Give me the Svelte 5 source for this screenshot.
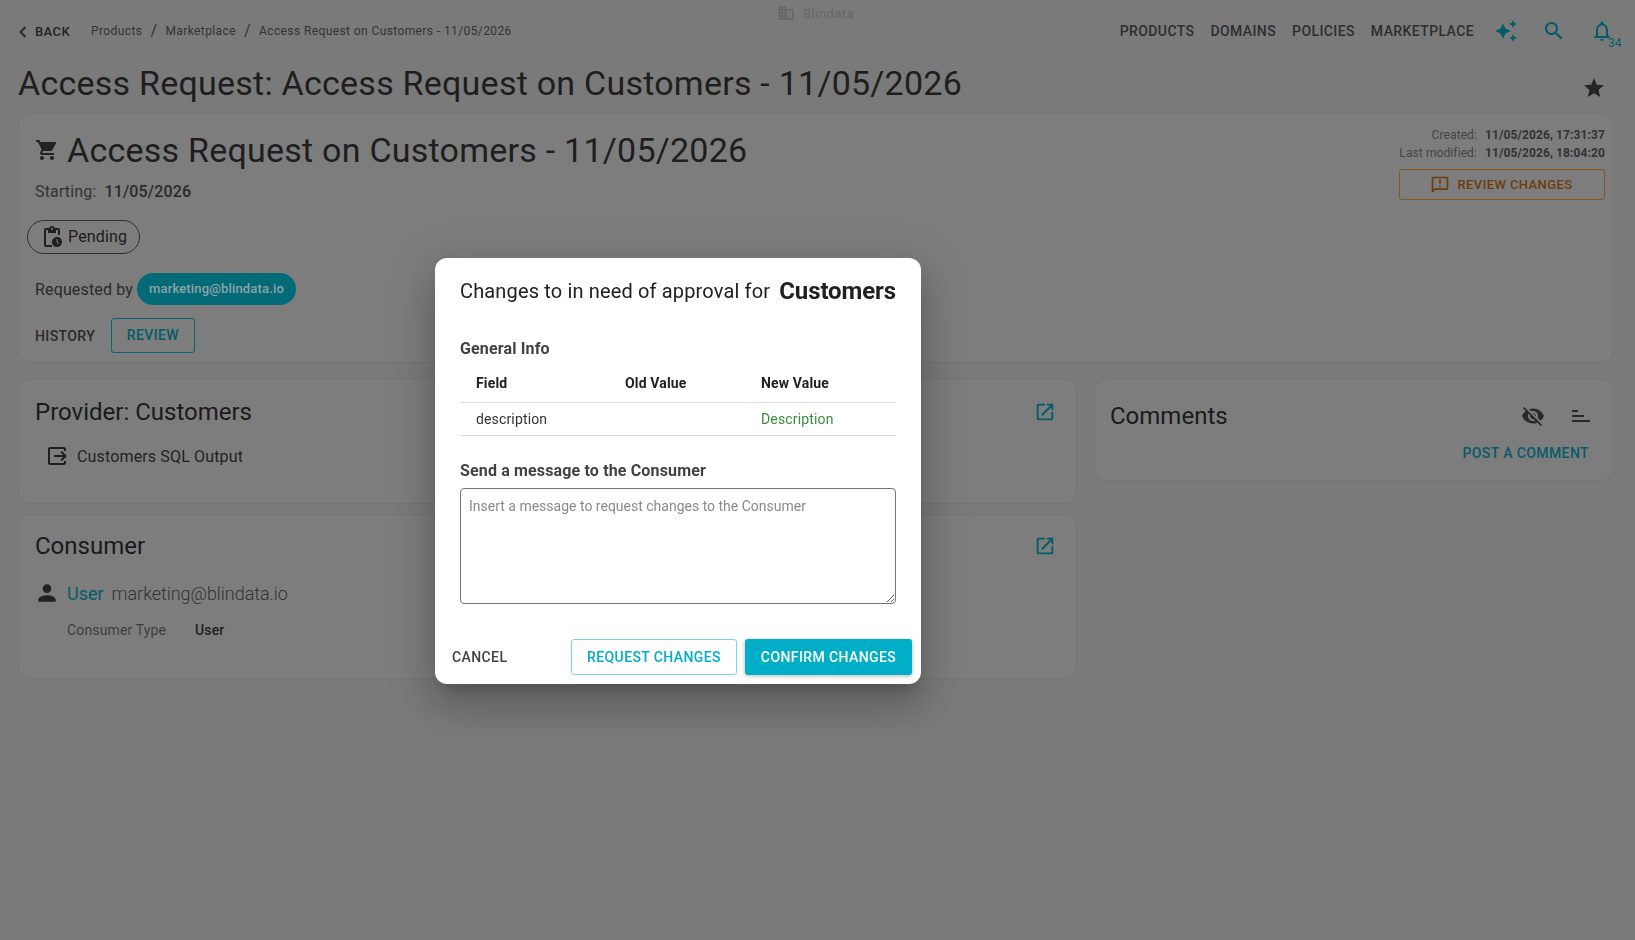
<script>
  const crumbs = ['Products', 'Marketplace'];
  const nav = ['PRODUCTS', 'DOMAINS', 'POLICIES', 'MARKETPLACE'];
</script>

<div class="page">
  <header class="top">
    <div class="brand">
      <svg class="brand-ico" viewBox="0 0 24 24"><path d="M12 7V3H2v18h20V7H12zM6 19H4v-2h2v2zm0-4H4v-2h2v2zm0-4H4V9h2v2zm0-4H4V5h2v2zm4 12H8v-2h2v2zm0-4H8v-2h2v2zm0-4H8V9h2v2zm0-4H8V5h2v2zm10 12h-8v-2h2v-2h-2v-2h2v-2h-2V9h8v10zm-2-8h-2v2h2v-2zm0 4h-2v2h2v-2z"/></svg>
      <span>Blindata</span>
    </div>
    <div class="left">
      <button class="back">
        <svg width="8" height="12" viewBox="0 0 8 12"><path d="M6.5 1 1.6 6l4.9 5" fill="none" stroke="#2b2b2b" stroke-width="2"/></svg>
        BACK
      </button>
      <nav class="crumbs">
        {#each crumbs as c}
          <span>{c}</span><i>/</i>
        {/each}
        <span>Access Request on Customers - 11/05/2026</span>
      </nav>
    </div>
    <div class="right">
      {#each nav as n}<span class="nav-item">{n}</span>{/each}
      <svg class="ico teal spark" viewBox="0 0 24 24"><path d="M19 9l1.25-2.75L23 5l-2.75-1.25L19 1l-1.25 2.75L15 5l2.75 1.25L19 9zm-7.5.5L9 4 6.5 9.5 1 12l5.5 2.5L9 20l2.5-5.5L17 12l-5.5-2.5zM19 15l-1.25 2.75L15 19l2.75 1.25L19 23l1.25-2.75L23 19l-2.75-1.25L19 15z"/></svg>
      <svg class="ico teal search" viewBox="0 0 24 24"><path d="M15.5 14h-.79l-.28-.27C15.41 12.59 16 11.11 16 9.5 16 5.91 13.09 3 9.5 3S3 5.91 3 9.5 5.91 16 9.5 16c1.61 0 3.09-.59 4.23-1.57l.27.28v.79l5 4.99L20.49 19l-4.99-5zm-6 0C7.01 14 5 11.99 5 9.5S7.01 5 9.5 5 14 7.01 14 9.5 11.99 14 9.5 14z"/></svg>
      <div class="bell">
        <svg class="ico teal" viewBox="0 0 24 24"><path d="M12 22c1.1 0 2-.9 2-2h-4c0 1.1.9 2 2 2zm6-6v-5c0-3.07-1.63-5.64-4.5-6.32V4c0-.83-.67-1.5-1.5-1.5s-1.5.67-1.5 1.5v.68C7.64 5.36 6 7.92 6 11v5l-2 2v1h16v-1l-2-2zm-2 1H8v-6c0-2.48 1.51-4.5 4-4.5s4 2.02 4 4.5v6z"/></svg>
        <span class="badge">34</span>
      </div>
    </div>
  </header>

  <div class="title-row">
    <h1>Access Request: Access Request on Customers - 11/05/2026</h1>
    <svg class="ico star" viewBox="0 0 24 24"><path d="M12 17.27L18.18 21l-1.64-7.03L22 9.24l-7.19-.61L12 2 9.19 8.63 2 9.24l5.46 4.73L5.82 21z"/></svg>
  </div>

  <section class="card main">
    <div class="main-left">
      <div class="h-row">
        <svg class="cart" viewBox="0 0 24 24"><path d="M7 18c-1.1 0-1.99.9-1.99 2S5.9 22 7 22s2-.9 2-2-.9-2-2-2zM1 2v2h2l3.6 7.59-1.35 2.45c-.16.28-.25.61-.25.96 0 1.1.9 2 2 2h12v-2H7.42c-.14 0-.25-.11-.25-.25l.03-.12.9-1.63h7.45c.75 0 1.41-.41 1.75-1.03l3.58-6.49c.08-.14.12-.31.12-.48 0-.55-.45-1-1-1H5.21l-.94-2H1zm16 16c-1.1 0-1.99.9-1.99 2s.89 2 1.99 2 2-.9 2-2-.9-2-2-2z"/></svg>
        <h2>Access Request on Customers - 11/05/2026</h2>
      </div>
      <div class="starting"><span>Starting:</span> <b>11/05/2026</b></div>
      <div class="pending">
        <svg viewBox="0 0 24 24"><path d="M17 12c-2.76 0-5 2.24-5 5s2.24 5 5 5 5-2.24 5-5-2.24-5-5-5zm1.65 7.35L16.5 17.2V14h1v2.79l1.85 1.85-.7.71zM18 3h-3.18C14.4 1.84 13.3 1 12 1s-2.4.84-2.82 2H6c-1.1 0-2 .9-2 2v15c0 1.1.9 2 2 2h6v-2H6V5h2v3h8V5h2v5h2V5c0-1.1-.9-2-2-2zm-6 2c-.55 0-1-.45-1-1s.45-1 1-1 1 .45 1 1-.45 1-1 1z"/></svg>
        <span>Pending</span>
      </div>
      <div class="req">
        <span>Requested by</span>
        <span class="chip">marketing@blindata.io</span>
      </div>
      <div class="tabs">
        <span class="tab">HISTORY</span>
        <span class="tab active">REVIEW</span>
      </div>
    </div>
    <div class="main-right">
      <div class="meta"><span>Created:</span><b>11/05/2026, 17:31:37</b></div>
      <div class="meta"><span>Last modified:</span><b>11/05/2026, 18:04:20</b></div>
      <button class="review">
        <svg viewBox="0 0 24 24"><path d="M20 2H4c-1.1 0-1.99.9-1.99 2L2 22l4-4h14c1.1 0 2-.9 2-2V4c0-1.1-.9-2-2-2zm0 14H5.17L4 17.17V4h16v12zM11 5h2v6h-2zm0 8h2v2h-2z"/></svg>
        REVIEW CHANGES
      </button>
    </div>
  </section>

  <div class="grid">
    <div class="col">
      <section class="card provider">
        <div class="card-head">
          <h3>Provider: Customers</h3>
          <svg class="open" viewBox="0 0 24 24"><path d="M19 19H5V5h7V3H5c-1.11 0-2 .9-2 2v14c0 1.1.89 2 2 2h14c1.1 0 2-.9 2-2v-7h-2v7zM14 3v2h3.59l-9.83 9.83 1.41 1.41L19 6.41V10h2V3h-7z"/></svg>
        </div>
        <div class="port">
          <svg viewBox="0 0 24 24"><path d="M17 17l5-5-5-5-1.41 1.41L18.17 11H9v2h9.17l-2.58 2.59z"/><path d="M19 19H5V5h14v2h2V5c0-1.1-.89-2-2-2H5c-1.11 0-2 .9-2 2v14c0 1.1.89 2 2 2h14c1.11 0 2-.9 2-2v-2h-2v2z"/></svg>
          <span>Customers SQL Output</span>
        </div>
      </section>
      <section class="card consumer">
        <div class="card-head">
          <h3>Consumer</h3>
          <svg class="open" viewBox="0 0 24 24"><path d="M19 19H5V5h7V3H5c-1.11 0-2 .9-2 2v14c0 1.1.89 2 2 2h14c1.1 0 2-.9 2-2v-7h-2v7zM14 3v2h3.59l-9.83 9.83 1.41 1.41L19 6.41V10h2V3h-7z"/></svg>
        </div>
        <div class="user">
          <svg viewBox="0 0 24 24"><path d="M12 12c2.21 0 4-1.79 4-4s-1.79-4-4-4-4 1.79-4 4 1.79 4 4 4zm0 2c-2.67 0-8 1.34-8 4v2h16v-2c0-2.66-5.33-4-8-4z"/></svg>
          <span class="u-link">User</span>
          <span class="u-mail">marketing@blindata.io</span>
        </div>
        <div class="ctype"><span>Consumer Type</span><b>User</b></div>
      </section>
    </div>
    <section class="card comments">
      <div class="card-head">
        <h3>Comments</h3>
        <div class="c-icons">
          <svg viewBox="0 0 24 24"><path d="M12 7c2.76 0 5 2.24 5 5 0 .65-.13 1.26-.36 1.83l2.92 2.92c1.51-1.26 2.7-2.89 3.43-4.75-1.73-4.39-6-7.5-11-7.5-1.4 0-2.74.25-3.98.7l2.16 2.16C10.74 7.13 11.35 7 12 7zM2 4.27l2.28 2.28.46.46C3.08 8.3 1.78 10.02 1 12c1.73 4.39 6 7.5 11 7.5 1.55 0 3.03-.3 4.38-.84l.42.42L19.73 22 21 20.73 3.27 3 2 4.27zM7.53 9.8l1.55 1.55c-.05.21-.08.43-.08.65 0 1.66 1.34 3 3 3 .22 0 .44-.03.65-.08l1.55 1.55c-.67.33-1.41.53-2.2.53-2.76 0-5-2.24-5-5 0-.79.2-1.53.53-2.2zm4.31-.78l3.15 3.15.02-.16c0-1.66-1.34-3-3-3l-.17.01z"/></svg>
          <svg viewBox="0 0 24 24"><path d="M3 6h6v2H3zM3 11h12v2H3zM3 16h18v2H3z"/></svg>
        </div>
      </div>
      <div class="post">POST A COMMENT</div>
    </section>
  </div>
</div>

<div class="backdrop">
  <div class="modal" role="dialog">
    <div class="m-title">
      <span>Changes to in need of approval for</span>
      <b>Customers</b>
    </div>
    <div class="m-section">General Info</div>
    <table>
      <thead>
        <tr><th class="c1">Field</th><th class="c2">Old Value</th><th>New Value</th></tr>
      </thead>
      <tbody>
        <tr><td>description</td><td></td><td class="new">Description</td></tr>
      </tbody>
    </table>
    <div class="m-section msg">Send a message to the Consumer</div>
    <textarea placeholder="Insert a message to request changes to the Consumer"></textarea>
    <div class="actions">
      <button class="cancel">CANCEL</button>
      <button class="outline">REQUEST CHANGES</button>
      <button class="solid">CONFIRM CHANGES</button>
    </div>
  </div>
</div>

<style>
  :global(body) {
    margin: 0;
    background: #7a7a7a;
    font-family: Roboto, "Liberation Sans", sans-serif;
    color: #1c1c1c;
  }
  .page {
    height: 940px;
    box-sizing: border-box;
    padding: 0 21px 0 18px;
    overflow: hidden;
  }
  .top {
    height: 62px;
    display: flex;
    justify-content: space-between;
    position: relative;
  }
  .brand {
    position: absolute;
    left: 759px;
    top: 4px;
    display: flex;
    align-items: center;
    gap: 8px;
    font-size: 13px;
    letter-spacing: 0.5px;
    color: #666;
  }
  .brand-ico { width: 18px; height: 18px; fill: #666; }
  .left { display: flex; align-items: flex-start; padding-top: 20px; }
  .back {
    all: unset;
    display: flex;
    align-items: center;
    gap: 8px;
    font-size: 13px;
    font-weight: 500;
    letter-spacing: 0.4px;
    color: #222;
    line-height: 24px;
    height: 24px;
    margin-left: 1px;
  }
  .crumbs {
    display: flex;
    align-items: center;
    margin-left: 21px;
    font-size: 12px;
    letter-spacing: 0.4px;
    color: #333;
    height: 22px;
  }
  .crumbs i {
    font-style: normal;
    font-size: 16px;
    margin: 0 8px;
    color: #333;
    position: relative;
    top: -1px;
  }
  .right { display: flex; align-items: flex-start; padding-top: 22px; }
  .nav-item {
    font-size: 14px;
    font-weight: 500;
    letter-spacing: 0.4px;
    line-height: 18px;
    color: #2e2e2e;
    margin-right: 16px;
  }
  .nav-item:nth-of-type(4) { margin-right: 0; }
  .ico { width: 24px; height: 24px; display: block; flex: none; }
  .teal { fill: #045c6a; }
  .spark { margin: -3px 0 0 20px; }
  .search { margin: -3px 0 0 24px; }
  .bell { position: relative; margin: -3px 0 0 24px; }
  .badge {
    position: absolute;
    left: 18px;
    top: 17px;
    font-size: 12px;
    color: #045c6a;
  }
  .title-row {
    display: flex;
    justify-content: space-between;
    height: 42px;
    margin-bottom: 9px;
  }
  h1 {
    margin: 0;
    font-size: 34px;
    font-weight: 400;
    line-height: 42px;
    letter-spacing: 0.24px;
    color: #1e1e1e;
  }
  .star { fill: #262626; margin: 14px 8px 0 0; }
  .card {
    background: #7d7d7d;
    border: 1px solid #757575;
    border-radius: 12px;
    box-sizing: border-box;
  }
  .main {
    height: 250px;
    display: flex;
    justify-content: space-between;
    padding: 15px 8px 8px 16px;
  }
  .h-row { display: flex; align-items: center; height: 42px; }
  .cart { width: 24px; height: 24px; fill: #222; margin-right: 8px; }
  h2 {
    margin: 0;
    font-size: 34px;
    font-weight: 400;
    line-height: 42px;
    letter-spacing: 0.24px;
    color: #1e1e1e;
  }
  .starting {
    margin-top: 9px;
    font-size: 16px;
    line-height: 24px;
    color: #333;
  }
  .starting span { margin-right: 4px; letter-spacing: 0.15px; }
  .starting b { font-weight: 500; color: #2a2a2a; letter-spacing: 0.15px; }
  .pending {
    width: 113px;
    height: 34px;
    margin: 16px 0 0 -8px;
    box-sizing: border-box;
    border: 1px solid #2f2f2f;
    border-radius: 17px;
    display: flex;
    align-items: center;
    padding-left: 12px;
    gap: 4px;
    font-size: 16px;
    letter-spacing: 0.15px;
    color: #1c1c1c;
  }
  .pending svg { width: 24px; height: 24px; fill: #1f1f1f; }
  .pending span { margin-top: -2px; }
  .req {
    display: flex;
    align-items: center;
    margin-top: 19px;
    height: 32px;
    font-size: 16px;
    letter-spacing: 0.15px;
    color: #2a2a2a;
    gap: 4px;
  }
  .chip {
    height: 32px;
    border-radius: 16px;
    background: #036a77;
    color: #8fa3a7;
    font-size: 13px;
    font-weight: 500;
    letter-spacing: 0.16px;
    padding: 0 12px;
    line-height: 32px;
  }
  .tabs { display: flex; align-items: center; margin-top: 13px; gap: 16px; }
  .tab {
    font-size: 14px;
    font-weight: 500;
    letter-spacing: 0.4px;
    color: #2a2a2a;
  }
  .tab.active {
    box-sizing: border-box;
    height: 35px;
    line-height: 33px;
    padding: 0 14.5px;
    border: 1px solid #0a6471;
    border-radius: 3px;
    color: #045c6a;
  }
  .main-right { display: flex; flex-direction: column; align-items: flex-end; margin-top: -3px; }
  .meta {
    display: flex;
    gap: 8px;
    font-size: 12px;
    line-height: 18px;
    color: #444;
    letter-spacing: 0.1px;
  }
  .meta b { font-weight: 700; color: #333; }
  .review {
    all: unset;
    box-sizing: border-box;
    width: 206px;
    height: 31px;
    margin-top: 7px;
    border: 1px solid #8a5520;
    border-radius: 3px;
    display: flex;
    align-items: center;
    justify-content: center;
    gap: 8px;
    font-size: 13px;
    font-weight: 500;
    letter-spacing: 0.4px;
    color: #6e3c0c;
    padding-right: 2px;
  }
  .review svg { width: 20px; height: 20px; fill: #6e3c0c; }
  .grid {
    display: grid;
    grid-template-columns: 1059px 1fr;
    gap: 17px;
    margin-top: 16px;
    align-items: start;
  }
  .col { display: flex; flex-direction: column; gap: 10px; }
  .provider { height: 125px; padding: 16px 20px 0 16px; }
  .consumer { height: 165px; padding: 15px 20px 0 16px; }
  .comments { height: 102px; padding: 20px 19px 0 15px; }
  .card-head { display: flex; justify-content: space-between; align-items: center; height: 32px; }
  h3 { margin: 0; font-size: 24px; font-weight: 400; line-height: 32px; color: #1a1a1a; }
  .open { width: 22px; height: 22px; fill: #045c6a; }
  .port {
    display: flex;
    align-items: center;
    margin: 16px 0 0 10px;
    gap: 8px;
    font-size: 16px;
    color: #222;
    letter-spacing: 0.15px;
  }
  .port svg { width: 24px; height: 24px; fill: #1f1f1f; }
  .user { display: flex; align-items: center; margin: 15px 0 0 -1px; height: 32px; font-size: 18px; }
  .user svg { width: 26px; height: 26px; fill: #222; margin-right: 7px; }
  .u-link { color: #045c6a; margin-right: 8px; }
  .u-mail { color: #333; font-weight: 300; letter-spacing: -0.05px; }
  .ctype { display: flex; margin: 11px 0 0 32px; font-size: 14px; line-height: 20px; letter-spacing: 0.15px; }
  .ctype span { color: #3d3d3d; width: 128px; }
  .ctype b { font-weight: 500; color: #1f1f1f; }
  .c-icons { display: flex; align-items: center; gap: 24px; }
  .c-icons svg { width: 24px; height: 24px; fill: #2a2a2a; }
  .c-icons svg:last-child { margin-right: 1px; }
  .post {
    margin-top: 11px;
    text-align: right;
    padding-right: 5px;
    font-size: 14px;
    font-weight: 500;
    letter-spacing: 0.4px;
    line-height: 20px;
    color: #045c6a;
  }
  .backdrop {
    position: fixed;
    inset: 0;
    display: flex;
    align-items: center;
    padding-left: 435px;
  }
  .modal {
    width: 486px;
    height: 426px;
    margin-top: 1px;
    box-sizing: border-box;
    background: #fff;
    border-radius: 12px;
    box-shadow: 0 11px 15px -7px rgba(0,0,0,.2), 0 24px 38px 3px rgba(0,0,0,.14), 0 9px 46px 8px rgba(0,0,0,.12);
    padding: 20px 25px 0;
    display: flex;
    flex-direction: column;
  }
  .m-title { display: flex; align-items: center; justify-content: space-between; height: 26px; color: #212121; }
  .m-title span { font-size: 20px; letter-spacing: 0.15px; }
  .m-title b { font-size: 24px; font-weight: 700; letter-spacing: -0.1px; }
  .m-section { font-size: 16px; font-weight: 700; color: #424242; line-height: 20px; margin-top: 35px; letter-spacing: 0.15px; }
  .msg { margin-top: 25px; }
  table { width: 100%; border-collapse: collapse; font-size: 14px; margin-top: 6px; table-layout: fixed; }
  th { text-align: left; font-weight: 700; height: 37px; padding: 0 0 0 16px; border-bottom: 1px solid #e0e0e0; color: #212121; letter-spacing: 0.15px; }
  th.c1 { width: 133px; }
  th.c2 { width: 120px; }
  td { height: 32px; padding: 0 0 0 16px; border-bottom: 1px solid #e0e0e0; color: #333; letter-spacing: 0.15px; }
  td.new { color: #388e3c; }
  textarea {
    display: block;
    box-sizing: border-box;
    width: 100%;
    height: 116px;
    margin-top: 7px;
    padding: 8px;
    border: 1px solid #767676;
    border-radius: 4px;
    font-family: inherit;
    font-size: 14px;
    line-height: 18px;
    outline: none;
    flex: none;
  }
  textarea::placeholder { color: #8a8a8a; }
  .actions { display: flex; align-items: center; margin: 35px -16px 0 -8px; }
  .actions button {
    font-family: inherit;
    font-size: 14px;
    font-weight: 500;
    letter-spacing: 0.4px;
    height: 36px;
    border-radius: 3px;
    box-sizing: border-box;
    padding: 0;
  }
  .cancel { all: unset; border: 0; background: none; color: #424242; width: 119px; text-align: left; padding-left: 0; }
  .outline { background: #fff; border: 1px solid #7fd3e0; color: #00aec8; width: 166px; margin-right: 8px; }
  .solid { background: #00aec8; border: 0; color: #fff; width: 167px; box-shadow: 0 1px 4px rgba(0,0,0,.3); }
</style>
